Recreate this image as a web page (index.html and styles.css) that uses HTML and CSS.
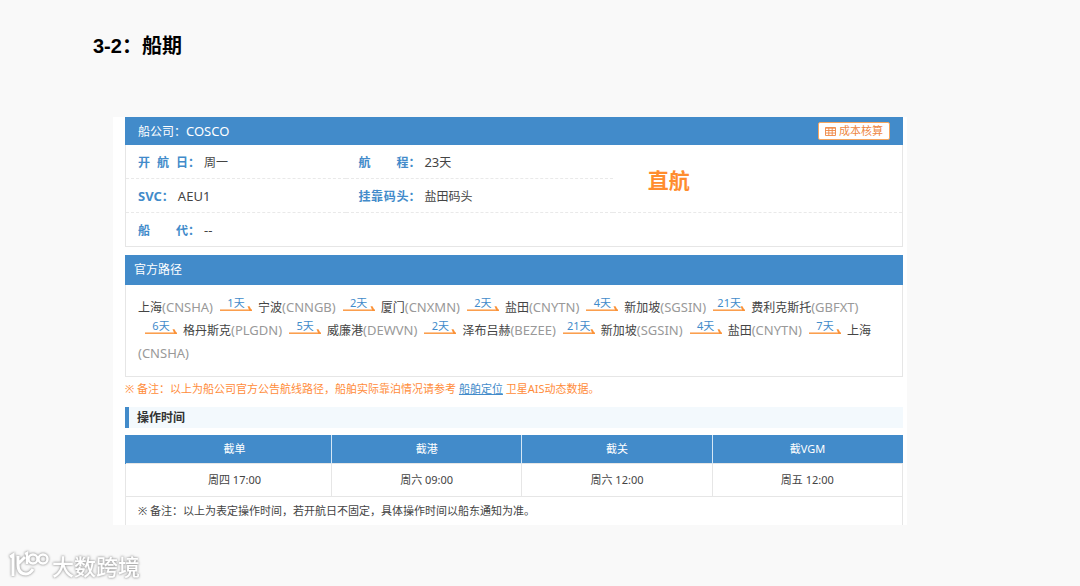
FILE: index.html
```html
<!DOCTYPE html>
<html lang="zh-CN">
<head>
<meta charset="utf-8">
<meta name="viewport" content="width=device-width, initial-scale=1">
<title>船期</title>
<link rel="stylesheet" href="styles.css">
</head>
<body>
<svg class="defs" aria-hidden="true">
  <symbol id="arrow" viewBox="0 0 32 5"><path d="M0 4.2H32" stroke="#fb9a45" stroke-width="1.5" fill="none"/><path d="M27.5 .2L29.5 .2L32 4.9H29.5Z" fill="#fb9238"/></symbol>
</svg>
<h1 class="title">3-2：船期</h1>
<main class="panel">
  <section class="carrier">
    <header class="bar">
      <h2 class="bar-title">船公司：<span class="latin">COSCO</span></h2>
      <button class="cost" type="button">
        <svg class="cost-icon" viewBox="0 0 11 9" aria-hidden="true"><path d="M.5 .5H10.5V8.5H.5ZM.5 1.2H10.5M.5 3.5H10.5M.5 6H10.5M3.8 1V8.5M7.2 1V8.5" fill="none" stroke="#ee8743" stroke-width=".9"/></svg>
        成本核算
      </button>
    </header>
    <dl class="info">
      <div class="field"><dt class="label"><span class="spread"><span>开</span><span>航</span><span>日</span></span>：</dt><dd class="value">周一</dd></div>
      <div class="field"><dt class="label"><span class="spread"><span>航</span><span>程</span></span>：</dt><dd class="value"><span class="latin">23</span>天</dd></div>
      <div class="direct"><strong>直航</strong></div>
      <div class="field"><dt class="label"><span class="latin">SVC</span>：</dt><dd class="value latin">AEU1</dd></div>
      <div class="field"><dt class="label"><span class="spread"><span>挂</span><span>靠</span><span>码</span><span>头</span></span>：</dt><dd class="value">盐田码头</dd></div>
      <div class="field agent"><dt class="label"><span class="spread"><span>船</span><span>代</span></span>：</dt><dd class="value latin">--</dd></div>
    </dl>
  </section>

  <section class="path">
    <header class="bar path-bar"><h2 class="bar-title">官方路径</h2></header>
    <p class="route">上海<span class="code">(CNSHA)</span><span class="leg">1天<svg class="arrow"><use href="#arrow"/></svg></span>宁波<span class="code">(CNNGB)</span><span class="leg">2天<svg class="arrow"><use href="#arrow"/></svg></span>厦门<span class="code">(CNXMN)</span><span class="leg">2天<svg class="arrow"><use href="#arrow"/></svg></span>盐田<span class="code">(CNYTN)</span><span class="leg">4天<svg class="arrow"><use href="#arrow"/></svg></span>新加坡<span class="code">(SGSIN)</span><span class="leg">21天<svg class="arrow"><use href="#arrow"/></svg></span>费利克斯托<span class="code">(GBFXT)</span><span class="leg">6天<svg class="arrow"><use href="#arrow"/></svg></span>格丹斯克<span class="code">(PLGDN)</span><span class="leg">5天<svg class="arrow"><use href="#arrow"/></svg></span>威廉港<span class="code">(DEWVN)</span><span class="leg">2天<svg class="arrow"><use href="#arrow"/></svg></span>泽布吕赫<span class="code">(BEZEE)</span><span class="leg">21天<svg class="arrow"><use href="#arrow"/></svg></span>新加坡<span class="code">(SGSIN)</span><span class="leg">4天<svg class="arrow"><use href="#arrow"/></svg></span>盐田<span class="code">(CNYTN)</span><span class="leg">7天<svg class="arrow"><use href="#arrow"/></svg></span>上海<wbr><span class="code">(CNSHA)</span></p>
  </section>
  <p class="notice">※ 备注：以上为船公司官方公告航线路径，船舶实际靠泊情况请参考 <a class="link" href="#">船舶定位</a> 卫星AIS动态数据。</p>

  <section class="times">
    <h2 class="subtitle">操作时间</h2>
    <table class="schedule">
      <thead>
        <tr><th class="first" scope="col">截单</th><th scope="col">截港</th><th scope="col">截关</th><th scope="col">截VGM</th></tr>
      </thead>
      <tbody>
        <tr><td class="first">周四 17:00</td><td>周六 09:00</td><td>周六 12:00</td><td>周五 12:00</td></tr>
        <tr><td class="remark" colspan="4">※ 备注：以上为表定操作时间，若开航日不固定，具体操作时间以船东通知为准。</td></tr>
      </tbody>
    </table>
  </section>
</main>
<footer class="brand">
  <svg class="brand-logo" viewBox="0 0 40 30" aria-hidden="true">
    <g fill="none" stroke="#fff" stroke-width="3"><path d="M1 6L4 4V25M9 5V13Q9 23 17 23Q21 23 24 18M9 13L16 6"/><path d="M16 3L18 2V13" stroke-width="2.5"/><circle cx="24" cy="8" r="4.5" stroke-width="2.5"/><circle cx="34" cy="8" r="4.5" stroke-width="2.5"/></g>
  </svg>
  <span class="brand-name">大数跨境</span>
</footer>
</body>
</html>
```

FILE: styles.css
```css
* { box-sizing: border-box; }

body {
  margin: 0;
  padding: 32px 0 0;
  background: #f9f9f9;
  color: #444;
  font-family: "Noto Sans", "Noto Sans CJK SC", sans-serif;
  font-size: 12px;
}

h1, h2, p, dl, dd { margin: 0; }

.defs { display: none; }

.title {
  margin-left: 93px;
  color: #000;
  font: bold 20px/28px "Liberation Sans", "Noto Sans CJK SC", sans-serif;
}

.panel {
  margin: 57px 173px 0 113px;
  padding: 0 4px 0 12px;
  background: #fff;
}

.latin { font-size: 13px; }

.bar {
  display: flex;
  align-items: center;
  justify-content: space-between;
  height: 28px;
  padding: 0 13px;
  background: #428bca;
  color: #fff;
}

.bar-title { font-size: 12px; font-weight: 400; line-height: 20px; }

.cost {
  display: flex;
  align-items: center;
  gap: 3px;
  height: 18px;
  padding: 0 6px;
  border: 1px solid #f5a55f;
  border-radius: 2px;
  background: #fff;
  color: #ee8743;
  font: 11px/16px "Noto Sans", "Noto Sans CJK SC", sans-serif;
}

.cost-icon { width: 11px; height: 9px; }

.info {
  display: grid;
  grid-template-columns: 221fr 267fr 290fr;
  grid-template-rows: 34px 34px 33px;
  border: 1px solid #e6e6e6;
  border-top: 0;
}

.field {
  display: flex;
  align-items: center;
  padding-left: 12px;
  border-bottom: 1px dashed #e9e9e9;
}

.agent { grid-column: 1 / -1; border-bottom: 0; }

.label {
  display: flex;
  align-items: center;
  margin-right: 4px;
  color: #428bca;
  font-weight: 700;
}

.spread { display: flex; justify-content: space-between; width: 50px; }

.direct {
  grid-area: 1 / 3 / 3 / 4;
  display: flex;
  align-items: center;
  padding-left: 35px;
  border-bottom: 1px dashed #e9e9e9;
  color: #ff8c2e;
  font-size: 21px;
}

.path { margin-top: 8px; }

.path-bar { height: 30px; padding: 0 9px; }

.route {
  padding: 11px 12px;
  border: 1px solid #e6e6e6;
  border-top: 0;
  line-height: 23px;
}

.code { color: #999; font-size: 13px; }

.leg {
  display: inline-flex;
  flex-direction: column;
  align-items: center;
  width: 32px;
  margin: 0 6px 0 7px;
  color: #428bca;
  font-size: 11px;
  line-height: 12px;
  vertical-align: 5px;
}

.arrow { display: block; width: 32px; height: 5px; margin-top: -3px; }

.notice {
  padding-top: 3px;
  color: #ff8c3a;
  font-size: 11px;
  line-height: 18px;
}

.link { color: #428bca; }

.subtitle {
  margin: 9px 0 7px;
  padding-left: 8px;
  border-left: 4px solid #428bca;
  background: #f3f9fd;
  color: #333;
  font-size: 12px;
  line-height: 21px;
}

.schedule {
  width: 100%;
  border-collapse: collapse;
  table-layout: fixed;
  font-size: 11px;
  line-height: 16px;
  text-align: center;
}

.schedule th {
  height: 28px;
  padding: 0;
  border-left: 1px solid #d5e7f5;
  background: #428bca;
  color: #fff;
  font-weight: 400;
}

.schedule td {
  height: 33px;
  padding: 0;
  border: 1px solid #e6e6e6;
}

.schedule .first { width: 206px; padding-left: 12px; }

.schedule th.first { border-left-color: #428bca; }

.schedule .remark {
  height: 29px;
  padding-left: 12px;
  border-bottom: 0;
  text-align: left;
}

.brand {
  display: flex;
  align-items: center;
  gap: 3px;
  margin: 26px 0 0 9px;
  color: #fff;
  filter: drop-shadow(0 0 1px #999) drop-shadow(0 0 1px #ccc);
}

.brand-logo { width: 40px; height: 30px; }

.brand-name { font-size: 22px; font-weight: 500; line-height: 30px; }
```
